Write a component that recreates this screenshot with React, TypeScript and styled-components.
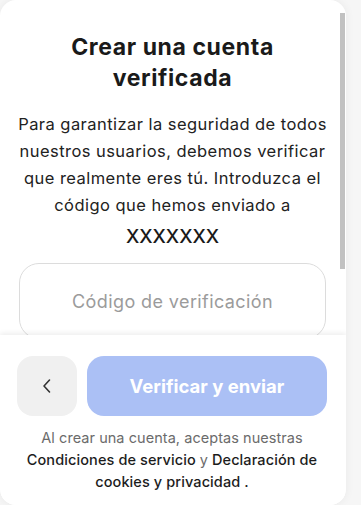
import React from "react";
import styled, { createGlobalStyle } from "styled-components";

const Global = createGlobalStyle`
  html, body { margin: 0; padding: 0; background: #f6f6f6; }
  body { font-family: "Inter", "Noto Sans", sans-serif; color: #1c1c1c; }
  * { box-sizing: border-box; }
`;

const Card = styled.div`
  position: relative;
  width: 346px;
  height: 505px;
  background: #fff;
  border-radius: 16px;
  box-shadow: 0 0 10px rgba(0, 0, 0, 0.06);
  display: flex;
  flex-direction: column;
  overflow: hidden;
`;

const Scroll = styled.div`
  flex: 1;
  min-height: 0;
  overflow-y: auto;
  scrollbar-width: none;
  padding: 32px 20px 0 19px;
  &::-webkit-scrollbar { display: none; }
`;

const ScrollThumb = styled.div`
  position: absolute;
  top: 13px;
  right: 1px;
  width: 5px;
  height: 256px;
  background: #c1c1c1;
`;

const Title = styled.h1`
  margin: 0;
  font-size: 23px;
  line-height: 31px;
  font-weight: 700;
  letter-spacing: 0.6px;
  text-align: center;
  color: #1a1a1a;
  padding: 0 30px;
`;

const Lead = styled.p`
  margin: 17px -6px 0;
  font-size: 16.5px;
  line-height: 27px;
  letter-spacing: 0.45px;
  text-align: center;
  color: #222;
`;

const Contact = styled.div`
  margin-top: 4px;
  font-size: 19px;
  line-height: 28px;
  text-align: center;
  color: #1a1a1a;
  font-weight: 500;
`;

const CodeInput = styled.input`
  display: block;
  width: 100%;
  height: 76px;
  margin: 12px 0 70px;
  border: 1px solid #dcdcdc;
  border-radius: 20px;
  font-family: inherit;
  font-size: 18px;
  letter-spacing: 0.4px;
  text-align: center;
  outline: none;
  padding: 0;
  &::placeholder { color: #9b9b9b; }
`;

const Footer = styled.div`
  flex: none;
  background: #fff;
  box-shadow: 0 -2px 5px rgba(0, 0, 0, 0.07);
  padding: 21px 19px 0 17px;
  height: 170px;
  position: relative;
`;

const Actions = styled.div`
  display: flex;
  gap: 10px;
`;

const BackButton = styled.button`
  width: 60px;
  height: 60px;
  flex: none;
  border: none;
  border-radius: 16px;
  background: #f0f0f0;
  display: flex;
  align-items: center;
  justify-content: center;
  padding: 0;
`;

const PrimaryButton = styled.button`
  flex: 1;
  height: 60px;
  border: none;
  border-radius: 17px;
  background: #abc0f5;
  color: #fff;
  font-family: inherit;
  font-size: 18.5px;
  font-weight: 700;
`;

const Legal = styled.div`
  margin: 11px -6px 0;
  text-align: center;
`;

const LegalLine = styled.div<{ $muted?: boolean }>`
  font-size: 14.5px;
  line-height: 22px;
  letter-spacing: ${(p) => (p.$muted ? "0.05px" : "0.1px")};
  color: ${(p) => (p.$muted ? "#6b6b6b" : "#1c1c1c")};
  font-weight: ${(p) => (p.$muted ? 400 : 500)};
`;

const Joiner = styled.span`
  color: #6b6b6b;
  font-weight: 400;
`;

export default function App() {
  return (
    <>
      <Global />
      <Card>
        <Scroll>
          <Title>Crear una cuenta verificada</Title>
          <Lead>
            Para garantizar la seguridad de todos nuestros usuarios, debemos verificar que realmente eres tú. Introduzca el código que hemos enviado a
          </Lead>
          <Contact>XXXXXXX</Contact>
          <CodeInput placeholder="Código de verificación" />
        </Scroll>
        <ScrollThumb />
        <Footer>
          <Actions>
            <BackButton aria-label="Volver">
              <svg width="12" height="16" viewBox="0 0 12 16" fill="none">
                <path d="M8.5 2 L3 8 L8.5 14" stroke="#333" strokeWidth="1.6" strokeLinecap="round" strokeLinejoin="round" />
              </svg>
            </BackButton>
            <PrimaryButton>Verificar y enviar</PrimaryButton>
          </Actions>
          <Legal>
            <LegalLine $muted>Al crear una cuenta, aceptas nuestras</LegalLine>
            <LegalLine>
              Condiciones de servicio <Joiner>y</Joiner> Declaración de
            </LegalLine>
            <LegalLine>cookies y privacidad .</LegalLine>
          </Legal>
        </Footer>
      </Card>
    </>
  );
}
